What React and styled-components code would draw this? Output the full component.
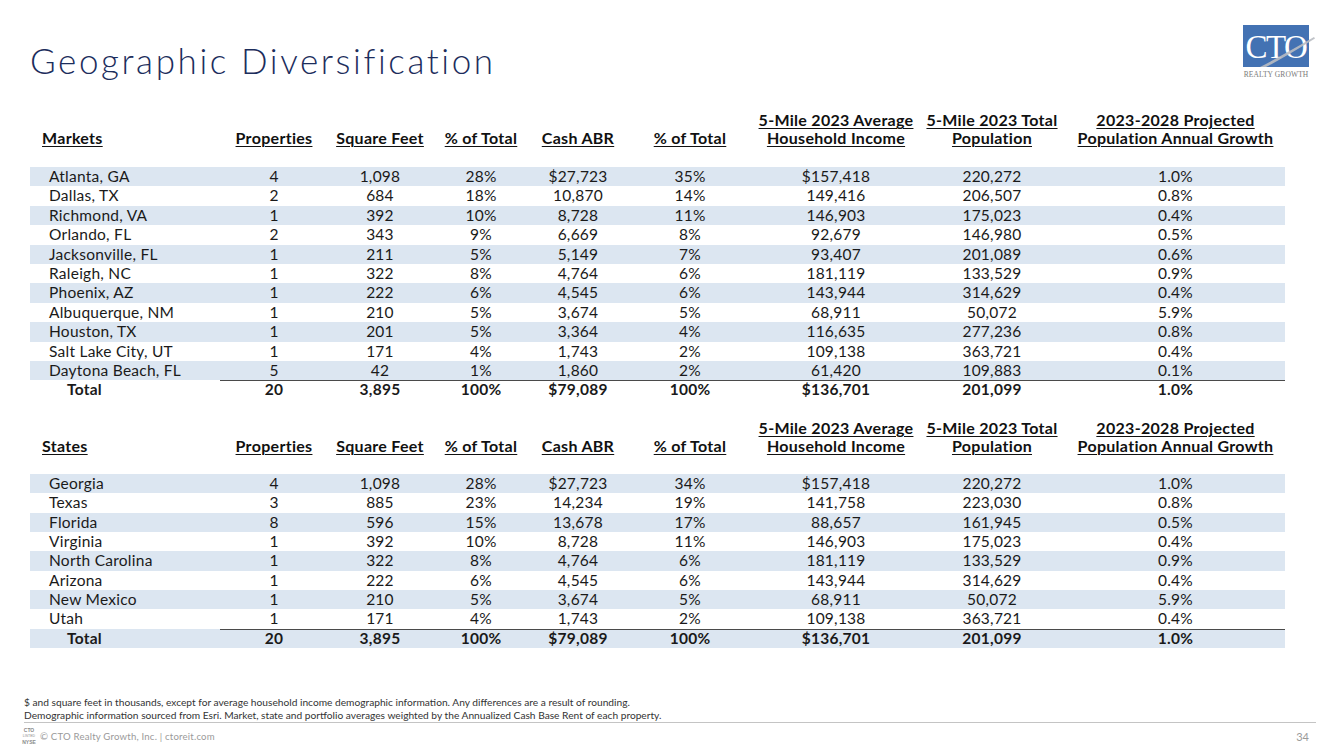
import React from "react";
import styled, { createGlobalStyle } from "styled-components";

const GlobalStyle = createGlobalStyle`
  html, body { margin: 0; padding: 0; background: #ffffff; }
  body { font-family: Lato, "Open Sans", sans-serif; color: #1a1a1a; }
  * { box-sizing: border-box; }
`;

const COLS = "190px 108px 104px 98px 96px 128px 164px 148px 219px";

const Page = styled.div`
  width: 1333px;
  height: 749px;
  display: flex;
  flex-direction: column;
  overflow: hidden;
  background: #fff;
`;

const TitleBar = styled.header`
  display: flex;
  justify-content: space-between;
  align-items: flex-start;
  height: 110px;
  padding: 0 24px 0 30px;
`;

const Title = styled.h1`
  margin: 39px 0 0 0;
  font-family: Lato, sans-serif;
  font-weight: 300;
  font-size: 35px;
  line-height: 1.2;
  color: #1c2d5c;
  letter-spacing: 2.6px;
`;

const Logo = styled.div`
  margin-top: 25px;
  display: flex;
  flex-direction: column;
  align-items: center;
`;

const LogoBox = styled.div`
  position: relative;
  width: 66px;
  height: 42px;
  background: #4372b3;
  display: flex;
  align-items: center;
  justify-content: center;
  font-family: "Liberation Serif", "DejaVu Serif", serif;
  font-size: 33px;
  line-height: 1;
  color: #ffffff;
  padding-top: 3px;
`;

const LogoWord = styled.span`
  position: relative;
  z-index: 1;
  letter-spacing: -1.5px;
`;

const Swoosh = styled.svg`
  position: absolute;
  left: 0;
  top: 0;
  overflow: visible;
  z-index: 2;
`;

const LogoTag = styled.div`
  margin-top: 3px;
  font-family: "Liberation Serif", serif;
  font-size: 7.5px;
  color: #7a7a7a;
  white-space: nowrap;
  letter-spacing: 0.1px;
`;

const Tables = styled.main`
  padding-left: 30px;
  display: flex;
  flex-direction: column;
`;

const TableBlock = styled.section`
  width: 1255px;
  margin-top: ${(p) => p.$gap || 0}px;
`;

const Row = styled.div`
  display: grid;
  grid-template-columns: ${COLS};
  height: ${(p) => p.$h}px;
  align-items: ${(p) => (p.$head ? "end" : "center")};
  background: ${(p) => (p.$shaded ? "#dce6f1" : "transparent")};
  font-weight: ${(p) => (p.$bold ? 700 : 400)};
  margin-bottom: ${(p) => p.$after || 0}px;
`;

const HeadCell = styled.div`
  font-family: Lato, sans-serif;
  font-weight: 700;
  font-size: 16px;
  line-height: 18px;
  letter-spacing: 0.3px;
  color: #111;
  text-align: ${(p) => (p.$left ? "left" : "center")};
  padding-left: ${(p) => (p.$left ? 12 : 0)}px;
  white-space: nowrap;
  padding-bottom: 1px;
`;

const Under = styled.span`
  text-decoration: underline;
  text-decoration-thickness: 1px;
  text-underline-offset: 2px;
`;

const Cell = styled.div`
  font-family: Lato, sans-serif;
  font-size: 15.5px;
  letter-spacing: 0.25px;
  line-height: ${(p) => p.$h}px;
  height: 100%;
  color: #1a1a1a;
  text-align: ${(p) => (p.$left ? "left" : "center")};
  padding-left: ${(p) => p.$pad || 0}px;
  white-space: nowrap;
  box-shadow: ${(p) => (p.$rule ? "inset 0 1px 0 #4a4a4a" : "none")};
`;

const Notes = styled.div`
  margin-top: auto;
  padding: 0 24px;
  font-family: Lato, sans-serif;
  font-size: 10.2px;
  line-height: 13px;
  color: #333;
`;

const Footer = styled.footer`
  margin: 0 17px 0 24px;
  height: 27px;
  border-top: 1px solid #c4c4c4;
  display: flex;
  align-items: center;
  justify-content: space-between;
`;

const FootLeft = styled.div`
  display: flex;
  align-items: center;
  gap: 4px;
  margin-left: -2px;
`;

const MiniLogo = styled.div`
  width: 14px;
  height: 24px;
  display: flex;
  flex-direction: column;
  align-items: center;
  justify-content: center;
  font-family: "Liberation Sans", sans-serif;
  font-size: 5px;
  line-height: 7px;
  color: #8a8a8a;
  font-weight: 700;
`;

const MiniSmall = styled.span`
  font-size: 3.5px;
  line-height: 5px;
  font-weight: 400;
`;

const Copy = styled.span`
  font-family: Lato, sans-serif;
  font-size: 9.6px;
  letter-spacing: 0.2px;
  color: #9a9a9a;
`;

const PageNum = styled.span`
  font-family: Lato, sans-serif;
  font-size: 11px;
  color: #9a9a9a;
  margin-right: 7px;
`;

const HEAD_REST = [
  ["Properties"],
  ["Square Feet"],
  ["% of Total"],
  ["Cash ABR"],
  ["% of Total"],
  ["5-Mile 2023 Average", "Household Income"],
  ["5-Mile 2023 Total", "Population"],
  ["2023-2028 Projected", "Population Annual Growth"],
];

const markets = [
  ["Atlanta, GA", "4", "1,098", "28%", "$27,723", "35%", "$157,418", "220,272", "1.0%"],
  ["Dallas, TX", "2", "684", "18%", "10,870", "14%", "149,416", "206,507", "0.8%"],
  ["Richmond, VA", "1", "392", "10%", "8,728", "11%", "146,903", "175,023", "0.4%"],
  ["Orlando, FL", "2", "343", "9%", "6,669", "8%", "92,679", "146,980", "0.5%"],
  ["Jacksonville, FL", "1", "211", "5%", "5,149", "7%", "93,407", "201,089", "0.6%"],
  ["Raleigh, NC", "1", "322", "8%", "4,764", "6%", "181,119", "133,529", "0.9%"],
  ["Phoenix, AZ", "1", "222", "6%", "4,545", "6%", "143,944", "314,629", "0.4%"],
  ["Albuquerque, NM", "1", "210", "5%", "3,674", "5%", "68,911", "50,072", "5.9%"],
  ["Houston, TX", "1", "201", "5%", "3,364", "4%", "116,635", "277,236", "0.8%"],
  ["Salt Lake City, UT", "1", "171", "4%", "1,743", "2%", "109,138", "363,721", "0.4%"],
  ["Daytona Beach, FL", "5", "42", "1%", "1,860", "2%", "61,420", "109,883", "0.1%"],
];

const states = [
  ["Georgia", "4", "1,098", "28%", "$27,723", "34%", "$157,418", "220,272", "1.0%"],
  ["Texas", "3", "885", "23%", "14,234", "19%", "141,758", "223,030", "0.8%"],
  ["Florida", "8", "596", "15%", "13,678", "17%", "88,657", "161,945", "0.5%"],
  ["Virginia", "1", "392", "10%", "8,728", "11%", "146,903", "175,023", "0.4%"],
  ["North Carolina", "1", "322", "8%", "4,764", "6%", "181,119", "133,529", "0.9%"],
  ["Arizona", "1", "222", "6%", "4,545", "6%", "143,944", "314,629", "0.4%"],
  ["New Mexico", "1", "210", "5%", "3,674", "5%", "68,911", "50,072", "5.9%"],
  ["Utah", "1", "171", "4%", "1,743", "2%", "109,138", "363,721", "0.4%"],
];

const TOTAL = ["Total", "20", "3,895", "100%", "$79,089", "100%", "$136,701", "201,099", "1.0%"];

function DataTable({ label, rows, rowH, spacer, gap }) {
  return (
    <TableBlock $gap={gap}>
      <Row $head $h={38} $after={spacer}>
        <HeadCell $left>
          <Under>{label}</Under>
        </HeadCell>
        {HEAD_REST.map((lines, i) => (
          <HeadCell key={i}>
            {lines.map((l, j) => (
              <div key={j}>
                <Under>{l}</Under>
              </div>
            ))}
          </HeadCell>
        ))}
      </Row>
      {rows.map((r, i) => (
        <Row key={r[0]} $h={rowH} $shaded={i % 2 === 0}>
          {r.map((v, j) => (
            <Cell key={j} $h={rowH} $left={j === 0} $pad={j === 0 ? 19 : 0}>
              {v}
            </Cell>
          ))}
        </Row>
      ))}
      <Row $h={rowH} $shaded={rows.length % 2 === 0} $bold>
        {TOTAL.map((v, j) => (
          <Cell key={j} $h={rowH} $left={j === 0} $pad={j === 0 ? 37 : 0} $rule={j > 0}>
            {v}
          </Cell>
        ))}
      </Row>
    </TableBlock>
  );
}

export default function App() {
  return (
    <>
      <GlobalStyle />
      <Page>
        <TitleBar>
          <Title>Geographic Diversification</Title>
          <Logo>
            <LogoBox>
              <LogoWord>CTO</LogoWord>
              <Swoosh width="72" height="42" viewBox="0 0 72 42">
                <path d="M17 42 Q 40 30 71 12 L 72 13.5 Q 44 31 23 42 Z" fill="#b9bcc2" opacity="0.9" />
              </Swoosh>
            </LogoBox>
            <LogoTag>REALTY GROWTH</LogoTag>
          </Logo>
        </TitleBar>
        <Tables>
          <DataTable label="Markets" rows={markets} rowH={19.4} spacer={19} gap={0} />
          <DataTable label="States" rows={states} rowH={19.3} spacer={18.5} gap={18} />
        </Tables>
        <Notes>
          <div>$ and square feet in thousands, except for average household income demographic information. Any differences are a result of rounding.</div>
          <div>Demographic information sourced from Esri. Market, state and portfolio averages weighted by the Annualized Cash Base Rent of each property.</div>
        </Notes>
        <Footer>
          <FootLeft>
            <MiniLogo>
              <span>CTO</span>
              <MiniSmall>LISTED</MiniSmall>
              <span>NYSE</span>
            </MiniLogo>
            <Copy>© CTO Realty Growth, Inc. | ctoreit.com</Copy>
          </FootLeft>
          <PageNum>34</PageNum>
        </Footer>
      </Page>
    </>
  );
}
